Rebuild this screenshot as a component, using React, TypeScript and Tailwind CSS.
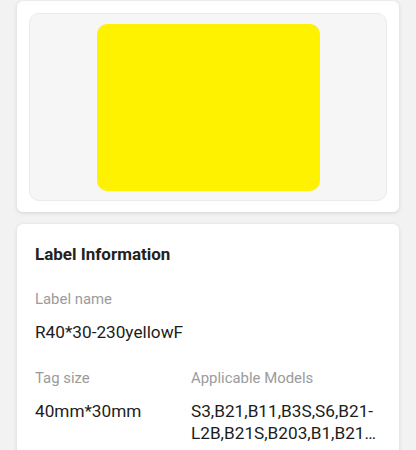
import React from "react";

export default function App() {
  return (
    <div
      className="w-[416px] h-[450px] overflow-hidden bg-[#f2f2f2] px-[17px] pt-[1px]"
      style={{ fontFamily: "Roboto, 'Noto Sans', sans-serif" }}
    >
      <div className="h-[211px] rounded-[6px] bg-white shadow-[0_1px_4px_rgba(0,0,0,0.12)] p-[12px] pb-[11px]">
        <div className="h-full rounded-[10px] border border-[#ebebeb] bg-[#f6f6f7] flex items-center justify-center">
          <div className="w-[223px] h-[167px] rounded-[10px] bg-[#fff200]" />
        </div>
      </div>
      <div className="mt-[12px] rounded-[6px] bg-white shadow-[0_1px_4px_rgba(0,0,0,0.12)] px-[18px] pt-[18px] pb-[20px]">
        <div className="text-[17px] leading-[24px] font-bold text-[#222222]">Label Information</div>
        <div className="mt-[23px] text-[14.9px] leading-[20px] text-[#9b9b9b]">Label name</div>
        <div className="mt-[11px] text-[17.2px] leading-[24px] text-[#1c1c1c]">R40*30-230yellowF</div>
        <div className="mt-[24px] grid grid-cols-[156px_1fr]">
          <div>
            <div className="text-[14.9px] leading-[20px] text-[#9b9b9b]">Tag size</div>
            <div className="mt-[12px] text-[17.2px] leading-[22px] text-[#1c1c1c]">40mm*30mm</div>
          </div>
          <div>
            <div className="text-[14.9px] leading-[20px] text-[#9b9b9b]">Applicable Models</div>
            <div className="mt-[12px] text-[17.2px] leading-[22px] text-[#1c1c1c]">
              S3,B21,B11,B3S,S6,B21-L2B,B21S,B203,B1,B21…
            </div>
          </div>
        </div>
      </div>
    </div>
  );
}
